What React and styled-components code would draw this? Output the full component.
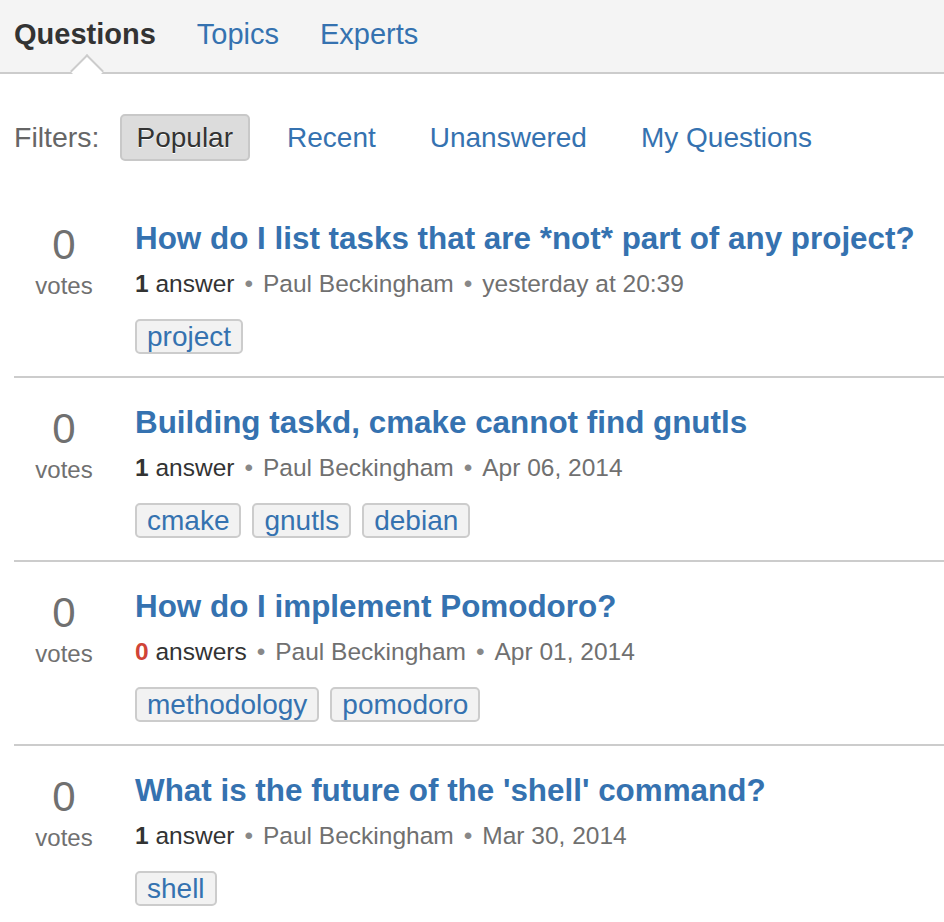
import React from 'react'
import styled, { createGlobalStyle } from 'styled-components'

const GlobalStyle = createGlobalStyle`
  body {
    margin: 0;
    background: #fff;
    font-family: "Liberation Sans", Arial, sans-serif;
  }
`

const Header = styled.div`
  position: relative;
  box-sizing: border-box;
  height: 74px;
  padding: 14px 14px 0;
  background: #f4f4f4;
  border-bottom: 2px solid #ccc;
  display: flex;
  gap: 41px;
`

const NavTab = styled.a`
  position: relative;
  font-size: 29px;
  line-height: 40px;
  color: ${p => (p.$active ? '#333' : '#3572b0')};
  font-weight: ${p => (p.$active ? 'bold' : 'normal')};
  text-decoration: none;

  ${p => p.$active && `
    &::after {
      content: '';
      position: absolute;
      left: 50%;
      top: 45px;
      width: 22px;
      height: 22px;
      margin-left: -10px;
      background: #fff;
      border-top: 2px solid #ccc;
      border-left: 2px solid #ccc;
      transform: rotate(45deg);
    }
  `}
`

const Content = styled.div`
  padding-left: 14px;
`

const FilterBar = styled.div`
  display: flex;
  align-items: center;
  margin-top: 40px;
  margin-bottom: 33px;
  font-size: 28px;
`

const FilterLabel = styled.span`
  color: #666;
  font-size: 28.5px;
  margin-right: 20px;
`

const FilterList = styled.div`
  display: flex;
  gap: 20px;
`

const Filter = styled.a`
  box-sizing: border-box;
  height: 47px;
  line-height: 43px;
  padding: 0 15px;
  border-radius: 5px;
  border: 2px solid ${p => (p.$active ? '#c8c8c8' : 'transparent')};
  background: ${p => (p.$active ? '#dcdcdc' : 'transparent')};
  color: ${p => (p.$active ? '#333' : '#3572b0')};
  text-shadow: ${p => (p.$active ? '0 1px 0 #fff' : 'none')};
`

const Question = styled.div`
  display: flex;
  padding: 26px 0 22px;
  border-top: ${p => (p.$first ? 'none' : '2px solid #ccc')};
`

const Votes = styled.div`
  width: 100px;
  flex-shrink: 0;
  margin-top: 4px;
  margin-right: 21px;
  display: flex;
  flex-direction: column;
  align-items: center;
  color: #707070;
`

const VoteCount = styled.span`
  font-size: 42px;
  line-height: 42px;
`

const VoteLabel = styled.span`
  font-size: 24px;
  line-height: 28px;
  margin-top: 6px;
`

const Body = styled.div`
  display: flex;
  flex-direction: column;
  min-width: 0;
`

const Title = styled.a`
  font-size: 31.4px;
  line-height: 38px;
  font-weight: bold;
  color: #3572b0;
  white-space: nowrap;
`

const Meta = styled.div`
  margin-top: 11px;
  font-size: 24.5px;
  line-height: 30px;
  color: #707070;
  white-space: nowrap;
`

const Answers = styled.span`
  color: #333;

  b {
    color: ${p => (p.$none ? '#d04437' : '#333')};
  }
`

const Dot = styled.span`
  margin: 0 10px;
  color: #888;
`

const Tags = styled.div`
  display: flex;
  gap: 11px;
  margin-top: 20px;
`

const Tag = styled.a`
  box-sizing: border-box;
  height: 35px;
  line-height: 31px;
  padding: 0 10px;
  font-size: 28px;
  color: #3572b0;
  background: #f2f2f2;
  border: 2px solid #ccc;
  border-radius: 5px;
`

const questions = [
  {
    title: 'How do I list tasks that are *not* part of any project?',
    answers: 1,
    date: 'yesterday at 20:39',
    tags: ['project'],
  },
  {
    title: 'Building taskd, cmake cannot find gnutls',
    answers: 1,
    date: 'Apr 06, 2014',
    tags: ['cmake', 'gnutls', 'debian'],
  },
  {
    title: 'How do I implement Pomodoro?',
    answers: 0,
    date: 'Apr 01, 2014',
    tags: ['methodology', 'pomodoro'],
  },
  {
    title: "What is the future of the 'shell' command?",
    answers: 1,
    date: 'Mar 30, 2014',
    tags: ['shell'],
  },
]

export default function App() {
  return (
    <>
      <GlobalStyle />
      <Header>
        <NavTab $active>Questions</NavTab>
        <NavTab>Topics</NavTab>
        <NavTab>Experts</NavTab>
      </Header>
      <Content>
        <FilterBar>
          <FilterLabel>Filters:</FilterLabel>
          <FilterList>
            <Filter $active>Popular</Filter>
            <Filter>Recent</Filter>
            <Filter>Unanswered</Filter>
            <Filter>My Questions</Filter>
          </FilterList>
        </FilterBar>
        {questions.map((q, i) => (
          <Question key={q.title} $first={i === 0}>
            <Votes>
              <VoteCount>0</VoteCount>
              <VoteLabel>votes</VoteLabel>
            </Votes>
            <Body>
              <Title>{q.title}</Title>
              <Meta>
                <Answers $none={q.answers === 0}>
                  <b>{q.answers}</b> {q.answers === 1 ? 'answer' : 'answers'}
                </Answers>
                <Dot>•</Dot>
                Paul Beckingham
                <Dot>•</Dot>
                {q.date}
              </Meta>
              <Tags>
                {q.tags.map(t => (
                  <Tag key={t}>{t}</Tag>
                ))}
              </Tags>
            </Body>
          </Question>
        ))}
      </Content>
    </>
  )
}
